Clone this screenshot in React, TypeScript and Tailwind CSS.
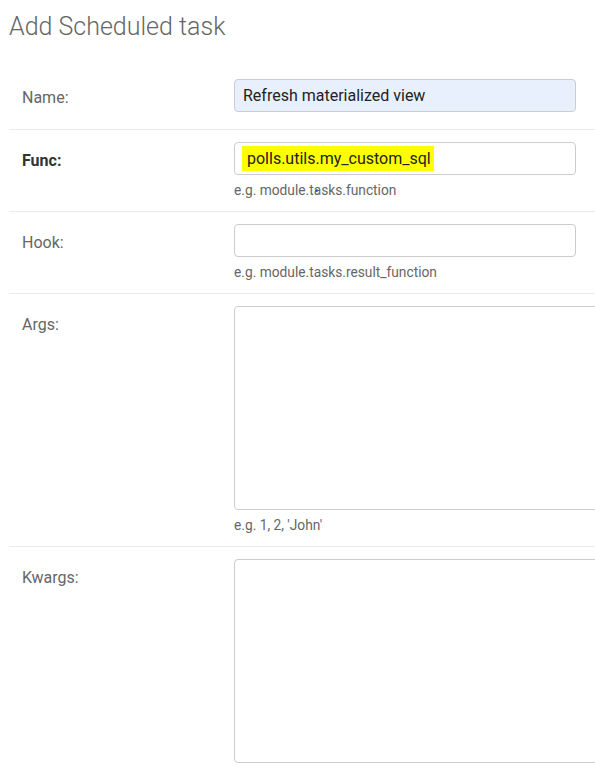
const font = { fontFamily: "Roboto, 'Liberation Sans', sans-serif" };

type RowProps = {
  label: string;
  bold?: boolean;
  help?: React.ReactNode;
  first?: boolean;
  children: React.ReactNode;
};

function Row({ label, bold, help, first, children }: RowProps) {
  return (
    <div className={`flex pl-[13px] ${first ? "pt-[13px] pb-[17px]" : "pt-[12px] pb-[12px] border-t border-[#eaeaea]"}`}>
      <label
        className={`w-[212px] shrink-0 pt-[9px] text-[16px] leading-5 ${bold ? "font-bold text-[#333]" : "text-[#666]"}`}
      >
        {label}
      </label>
      <div className="flex flex-col">
        {children}
        {help && <div className="relative mt-[6px] text-[13.75px] leading-[18px] text-[#666]">{help}</div>}
      </div>
    </div>
  );
}

export default function App() {
  return (
    <div className="w-[595px] h-[769px] overflow-hidden bg-white pl-[9px]" style={font}>
      <h1 className="mt-[12px] mb-[24px] text-[25px] leading-[30px] font-light text-[#666]">Add Scheduled task</h1>

      <Row label="Name:" first>
        <div className="w-[342px] h-[33px] rounded-[4px] border border-[#ccc] bg-[#e8f0fe] pl-[8px] text-[16px] leading-[31px] text-[#222]">
          Refresh materialized view
        </div>
      </Row>

      <Row
        label="Func:"
        bold
        help={
          <>
            e.g. module.tasks.function
            <span className="absolute left-[81px] top-[8px] w-[3px] h-[3px] rounded-full bg-[#2a5bd7]" />
          </>
        }
      >
        <div className="flex items-center w-[342px] h-[33px] rounded-[4px] border border-[#ccc] bg-white pl-[7px]">
          <span className="bg-[#ffff00] pl-[5px] pr-[3px] text-[16px] leading-[25px] text-[#222]">polls.utils.my_custom_sql</span>
        </div>
      </Row>

      <Row label="Hook:" help="e.g. module.tasks.result_function">
        <div className="w-[342px] h-[33px] rounded-[4px] border border-[#ccc] bg-white" />
      </Row>

      <Row label="Args:" help="e.g. 1, 2, 'John'">
        <div className="w-[610px] h-[204px] rounded-[4px] border border-[#ccc] bg-white" />
      </Row>

      <Row label="Kwargs:">
        <div className="w-[610px] h-[204px] rounded-[4px] border border-[#ccc] bg-white" />
      </Row>
    </div>
  );
}
